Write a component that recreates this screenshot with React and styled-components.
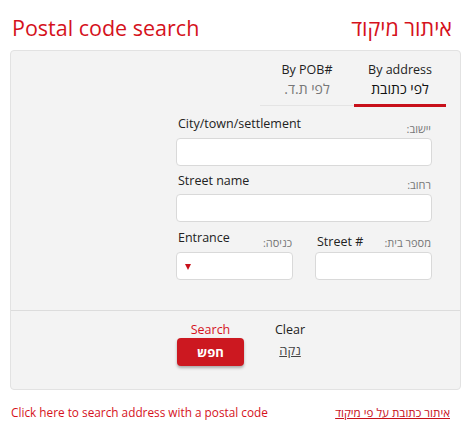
import React from 'react';
import styled, { createGlobalStyle } from 'styled-components';

const Global = createGlobalStyle`
    body {
        margin: 0;
        background: #fff;
        font-family: "Open Sans", "Noto Sans", sans-serif;
        color: #222;
    }
`;

const Page = styled.div`
    width: 474px;
    height: 428px;
    overflow: hidden;
`;

const Header = styled.div`
    display: flex;
    justify-content: space-between;
    align-items: center;
    height: 50px;
    padding: 4px 22px 0 12px;
    box-sizing: border-box;
    color: #d5121c;
    font-size: 21.5px;
`;

const Panel = styled.div`
    margin: 0 13px 0 10px;
    background: #f3f3f3;
    border: 1px solid #e2e2e2;
    border-radius: 4px;
    height: 340px;
    box-sizing: border-box;
    display: flex;
    flex-direction: column;
`;

const Tabs = styled.div`
    display: flex;
    justify-content: flex-end;
    padding: 10px 14px 0 0;
`;

const Tab = styled.div`
    width: ${p => p.w}px;
    text-align: center;
    font-size: 12.5px;
    line-height: 17px;
    color: #222;
    padding-bottom: 5px;
    border-bottom: ${p => (p.active ? '3px solid #c8101a' : '1px solid #e4e4e4')};
    margin-bottom: ${p => (p.active ? 0 : '1px')};
`;

const TabHe = styled.div`
    font-size: 14px;
    line-height: 21px;
    color: ${p => (p.active ? '#111' : '#777')};
    direction: rtl;
`;

const Form = styled.div`
    width: 256px;
    margin: 10px 28px 0 auto;
    display: flex;
    flex-direction: column;
    gap: 7px;
`;

const Field = styled.div`
    display: flex;
    flex-direction: column;
`;

const LabelRow = styled.div`
    display: flex;
    justify-content: space-between;
    align-items: flex-end;
    padding: 0 1px 0 2px;
    margin-bottom: 2px;
    height: 19px;
`;

const Label = styled.span`
    font-size: 12.5px;
    color: #222;
    position: relative;
    top: ${p => p.up || 0}px;
`;

const HeLabel = styled.span`
    font-size: 11px;
    color: #777;
    direction: rtl;
`;

const Input = styled.div`
    height: 28px;
    background: #fff;
    border: 1px solid #d9d9d9;
    border-radius: 4px;
    box-sizing: border-box;
    display: flex;
    align-items: center;
    padding-left: 8px;
`;

const Arrow = styled.span`
    width: 0;
    height: 0;
    border-left: 3.5px solid transparent;
    border-right: 3.5px solid transparent;
    border-top: 6px solid #c8101a;
    margin-top: 2px;
`;

const Pair = styled.div`
    display: grid;
    grid-template-columns: 117px 117px;
    gap: 22px;
    margin-top: 2px;
`;

const Footer = styled.div`
    margin-top: auto;
    height: 79px;
    border-top: 1px solid #dcdcdc;
    display: flex;
    padding-left: 166px;
    padding-top: 10px;
    box-sizing: border-box;
    gap: 31px;
`;

const Action = styled.div`
    display: flex;
    flex-direction: column;
    align-items: center;
`;

const ActionLabel = styled.div`
    font-size: 12.5px;
    line-height: 17px;
    color: ${p => p.color};
`;

const Button = styled.div`
    width: 67px;
    height: 28px;
    background: #cc1820;
    border-radius: 4px;
    box-shadow: 0 2px 3px rgba(0, 0, 0, 0.3);
    color: #fff;
    font-weight: 700;
    font-size: 13px;
    display: flex;
    align-items: center;
    justify-content: center;
    direction: rtl;
`;

const ClearLink = styled.a`
    font-size: 13px;
    color: #444;
    text-decoration: underline;
    direction: rtl;
    margin-top: 3px;
`;

const Links = styled.div`
    display: flex;
    justify-content: space-between;
    align-items: center;
    padding: 14px 24px 0 11px;
    font-size: 11.8px;
    color: #d5121c;
`;

const HeLink = styled.a`
    direction: rtl;
    color: #c8101a;
    text-decoration: underline;
    font-size: 11.6px;
`;

export default function App() {
    return (
        <Page>
            <Global />
            <Header>
                <span>Postal code search</span>
                <span dir="rtl">איתור מיקוד</span>
            </Header>
            <Panel>
                <Tabs>
                    <Tab w={94}>
                        By POB#
                        <TabHe>לפי ת.ד.</TabHe>
                    </Tab>
                    <Tab w={92} active>
                        By address
                        <TabHe active>לפי כתובת</TabHe>
                    </Tab>
                </Tabs>
                <Form>
                    <Field>
                        <LabelRow>
                            <Label up={-4}>City/town/settlement</Label>
                            <HeLabel>יישוב:</HeLabel>
                        </LabelRow>
                        <Input />
                    </Field>
                    <Field>
                        <LabelRow>
                            <Label up={-3}>Street name</Label>
                            <HeLabel>רחוב:</HeLabel>
                        </LabelRow>
                        <Input />
                    </Field>
                    <Pair>
                        <Field>
                            <LabelRow>
                                <Label up={-4}>Entrance</Label>
                                <HeLabel>כניסה:</HeLabel>
                            </LabelRow>
                            <Input>
                                <Arrow />
                            </Input>
                        </Field>
                        <Field>
                            <LabelRow>
                                <Label>Street #</Label>
                                <HeLabel>מספר בית:</HeLabel>
                            </LabelRow>
                            <Input />
                        </Field>
                    </Pair>
                </Form>
                <Footer>
                    <Action>
                        <ActionLabel color="#d5121c">Search</ActionLabel>
                        <Button>חפש</Button>
                    </Action>
                    <Action>
                        <ActionLabel color="#222">Clear</ActionLabel>
                        <ClearLink>נקה</ClearLink>
                    </Action>
                </Footer>
            </Panel>
            <Links>
                <span>Click here to search address with a postal code</span>
                <HeLink>איתור כתובת על פי מיקוד</HeLink>
            </Links>
        </Page>
    );
}
